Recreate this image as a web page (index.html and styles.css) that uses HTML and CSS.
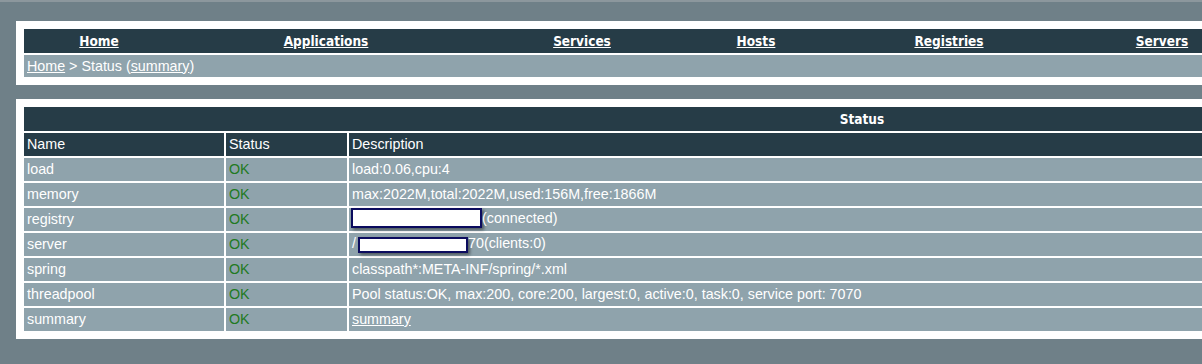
FILE: index.html
```html
<!DOCTYPE html>
<html lang="en">
<head>
    <meta charset="UTF-8">
    <title>Status</title>
    <link rel="stylesheet" href="styles.css">
</head>
<body>
    <!-- top menu + breadcrumb -->
    <div class="panel">
        <table class="nav">
            <tr class="menu">
                <td>
                    <div class="menu-items">
                        <a class="m-home" href="#">Home</a>
                        <a class="m-apps" href="#">Applications</a>
                        <a class="m-services" href="#">Services</a>
                        <a class="m-hosts" href="#">Hosts</a>
                        <a class="m-registries" href="#">Registries</a>
                        <a class="m-servers" href="#">Servers</a>
                    </div>
                </td>
            </tr>
            <tr class="crumb">
                <td><a href="#">Home</a> &gt; Status (<a href="#">summary</a>)</td>
            </tr>
        </table>
    </div>

    <!-- status list -->
    <div class="panel panel-list">
        <table class="list">
            <tr class="title">
                <th colspan="3">Status</th>
            </tr>
            <tr class="head">
                <td class="col-name">Name</td>
                <td class="col-status">Status</td>
                <td>Description</td>
            </tr>
            <tr>
                <td>load</td>
                <td class="ok">OK</td>
                <td>load:0.06,cpu:4</td>
            </tr>
            <tr>
                <td>memory</td>
                <td class="ok">OK</td>
                <td>max:2022M,total:2022M,used:156M,free:1866M</td>
            </tr>
            <tr>
                <td>registry</td>
                <td class="ok">OK</td>
                <td><span class="mask mask-registry"></span>(connected)</td>
            </tr>
            <tr>
                <td>server</td>
                <td class="ok">OK</td>
                <td>/<span class="mask mask-server"></span>70(clients:0)</td>
            </tr>
            <tr>
                <td>spring</td>
                <td class="ok">OK</td>
                <td>classpath*:META-INF/spring/*.xml</td>
            </tr>
            <tr>
                <td>threadpool</td>
                <td class="ok">OK</td>
                <td>Pool status:OK, max:200, core:200, largest:0, active:0, task:0, service port: 7070</td>
            </tr>
            <tr>
                <td>summary</td>
                <td class="ok">OK</td>
                <td><a href="#">summary</a></td>
            </tr>
        </table>
    </div>
</body>
</html>
```
FILE: styles.css
```css
html {
    background-color: #6f8088;
    border-top: 2px solid #8c979d;
}

body {
    margin: 0;
    padding: 19px 0 0 16px;
    font-family: "Liberation Sans", Arial, sans-serif;
    font-size: 14.3px;
    color: #fff;
    overflow: hidden;
}

a {
    color: #fff;
}

.panel {
    background-color: #fff;
    padding: 6px;
    width: 1680px;
}

.panel-list {
    margin-top: 14px;
}

table {
    width: 100%;
    border-spacing: 2px;
}

td, th {
    padding: 0 3px;
}

/* menu */
.menu td {
    background-color: #263c47;
    height: 24px;
    padding: 0;
}

.menu-items {
    display: flex;
    align-items: center;
    font-family: "DejaVu Sans Condensed", "DejaVu Sans", sans-serif;
    font-weight: bold;
    font-size: 13.5px;
}

.menu-items a {
    text-align: center;
}

.m-home { width: 150px; }
.m-apps { width: 304px; }
.m-services { width: 208px; }
.m-hosts { width: 140px; }
.m-registries { width: 246px; }
.m-servers { width: 180px; }

.crumb td {
    background-color: #8fa3ac;
    height: 21px;
    padding-bottom: 1px;
}

/* status list */
.title th {
    background-color: #263c47;
    height: 24px;
    font-family: "DejaVu Sans Condensed", "DejaVu Sans", sans-serif;
    font-size: 13.5px;
    font-weight: bold;
}

.list td {
    height: 22px;
    padding-bottom: 1px;
    background-color: #8fa3ac;
    white-space: nowrap;
}

.list .head td {
    background-color: #263c47;
}

.col-name { width: 194px; }
.col-status { width: 115px; }

.ok {
    color: #227a22;
}

.mask {
    display: inline-block;
    background-color: #fff;
    border: 2px solid #0b0b5e;
    box-shadow: 2px 2px 3px rgba(0, 0, 0, 0.45);
    vertical-align: middle;
}

.mask-registry {
    width: 127px;
    height: 16px;
    margin-left: -1px;
    margin-top: -2px;
}

.mask-server {
    width: 106px;
    height: 12px;
    margin-left: 2px;
}
```
